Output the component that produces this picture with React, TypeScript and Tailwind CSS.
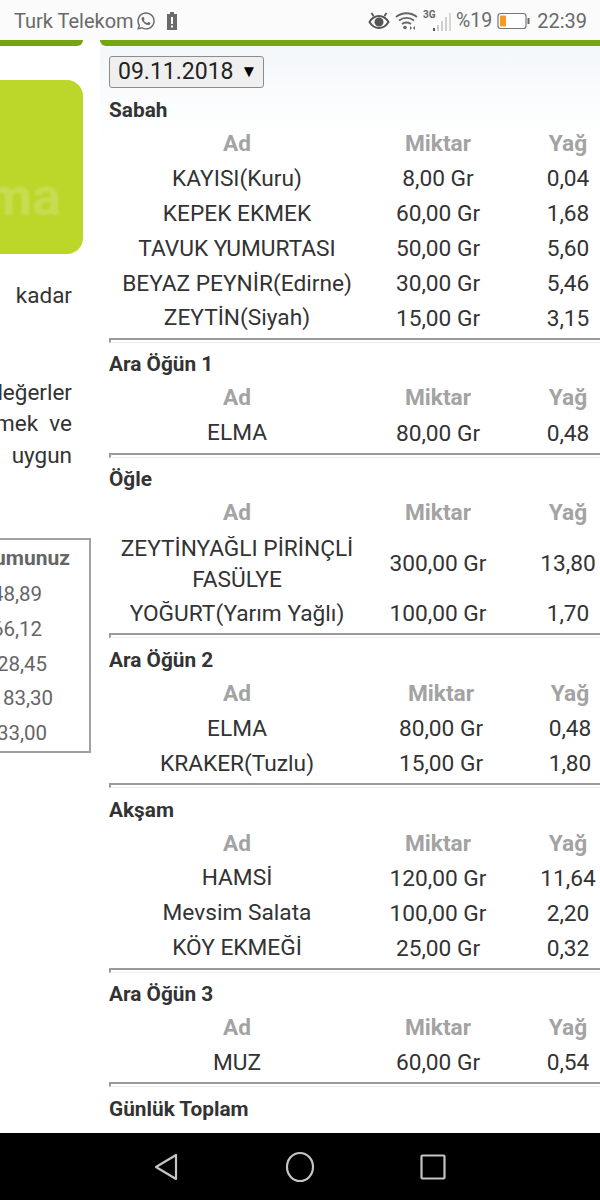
import { FaWhatsapp } from 'react-icons/fa';

type Row = { name: string[]; amount: string; fat: string };

type Meal = { title: string; cols: string; rows: Row[] };

const meals: Meal[] = [
  {
    title: 'Sabah',
    cols: 'grid-cols-[256px_146px_114px]',
    rows: [
      { name: ['KAYISI(Kuru)'], amount: '8,00 Gr', fat: '0,04' },
      { name: ['KEPEK EKMEK'], amount: '60,00 Gr', fat: '1,68' },
      { name: ['TAVUK YUMURTASI'], amount: '50,00 Gr', fat: '5,60' },
      { name: ['BEYAZ PEYNİR(Edirne)'], amount: '30,00 Gr', fat: '5,46' },
      { name: ['ZEYTİN(Siyah)'], amount: '15,00 Gr', fat: '3,15' },
    ],
  },
  {
    title: 'Ara Öğün 1',
    cols: 'grid-cols-[256px_146px_114px]',
    rows: [{ name: ['ELMA'], amount: '80,00 Gr', fat: '0,48' }],
  },
  {
    title: 'Öğle',
    cols: 'grid-cols-[256px_146px_114px]',
    rows: [
      { name: ['ZEYTİNYAĞLI PİRİNÇLİ', 'FASÜLYE'], amount: '300,00 Gr', fat: '13,80' },
      { name: ['YOĞURT(Yarım Yağlı)'], amount: '100,00 Gr', fat: '1,70' },
    ],
  },
  {
    title: 'Ara Öğün 2',
    cols: 'grid-cols-[256px_152px_106px]',
    rows: [
      { name: ['ELMA'], amount: '80,00 Gr', fat: '0,48' },
      { name: ['KRAKER(Tuzlu)'], amount: '15,00 Gr', fat: '1,80' },
    ],
  },
  {
    title: 'Akşam',
    cols: 'grid-cols-[256px_146px_114px]',
    rows: [
      { name: ['HAMSİ'], amount: '120,00 Gr', fat: '11,64' },
      { name: ['Mevsim Salata'], amount: '100,00 Gr', fat: '2,20' },
      { name: ['KÖY EKMEĞİ'], amount: '25,00 Gr', fat: '0,32' },
    ],
  },
  {
    title: 'Ara Öğün 3',
    cols: 'grid-cols-[256px_146px_114px]',
    rows: [{ name: ['MUZ'], amount: '60,00 Gr', fat: '0,54' }],
  },
];

// right padding differs per row, the cells were centered in a wider column
const summary = [
  { value: '48,89', pad: 'pr-[47px]' },
  { value: '66,12', pad: 'pr-[47px]' },
  { value: '128,45', pad: 'pr-[42px]' },
  { value: '83,30', pad: 'pr-[36px]' },
  { value: '133,00', pad: 'pr-[42px]' },
];

function MealTable({ meal }: { meal: Meal }) {
  return (
    <section>
      <h2 className="h-6 pl-[9px] text-[20.800px] leading-6 font-bold text-[#333]">{meal.title}</h2>
      <div className={`mt-[5px] ml-[9px] grid w-[516px] ${meal.cols} text-center text-[22.700px] text-[#333]`}>
        <div className="h-[34.900px] leading-[34.900px] font-bold text-[#a3a3a3]">Ad</div>
        <div className="h-[34.900px] leading-[34.900px] font-bold text-[#a3a3a3]">Miktar</div>
        <div className="h-[34.900px] leading-[34.900px] font-bold text-[#a3a3a3]">Yağ</div>
        {meal.rows.map((row) => (
          <div key={row.name[0]} className="contents">
            <div className={row.name.length > 1 ? 'py-0.5 leading-[31px]' : 'h-[34.900px] leading-[34.900px]'}>
              {row.name.map((line) => (
                <div key={line}>{line}</div>
              ))}
            </div>
            <div className="flex items-center justify-center">{row.amount}</div>
            <div className="flex items-center justify-center">{row.fat}</div>
          </div>
        ))}
      </div>
      <div className="mt-[1.500px] mb-[9.500px] ml-[9px] h-[5px] border-t-2 border-b border-l-2 border-t-[#9a9a9a] border-b-[#eeeeee] border-l-[#9a9a9a]" />
    </section>
  );
}

function StatusBar() {
  return (
    <div className="flex h-10 items-center bg-[#fbfbfb] pt-[2px] pr-[13px] pl-[14px] text-[20px] text-[#6a6a6a]">
      <span>Turk Telekom</span>
      <FaWhatsapp className="ml-[2px] h-5 w-5" />
      {/* battery warning */}
      <svg className="ml-[10px] h-5 w-3" viewBox="0 0 12 20">
        <path d="M4 1h4v2h3v16H1V3h3z" fill="#6a6a6a" />
        <rect x="5" y="6" width="2" height="7" fill="#fff" />
        <rect x="5" y="14.500" width="2" height="2" fill="#fff" />
      </svg>
      <div className="flex-1" />
      {/* eye comfort */}
      <svg className="h-[20px] w-[22px]" viewBox="0 0 21 20" fill="none" stroke="#555" strokeWidth="2">
        <path d="M1 11c3-5 6-6 9.500-6s6.500 1 9.500 6c-3 5-6 6-9.500 6S4 16 1 11z" />
        <circle cx="10.500" cy="11" r="3.500" fill="#555" />
        <path d="M3 2l2 3M18 2l-2 3" strokeWidth="1.800" />
      </svg>
      {/* wifi */}
      <svg className="ml-[5px] h-[20px] w-[23px]" viewBox="0 0 23 20" fill="none" stroke="#666" strokeWidth="1.800">
        <path d="M1 6c6-5 15-5 21 0M4 9.500c4.500-3.500 10.500-3.500 15 0M7 13c2.500-2 6.500-2 9 0" />
        <circle cx="10" cy="16.500" r="1.800" fill="#666" stroke="none" />
        <path d="M15 15v4l2-2zM20 15v4l-2-2z" fill="#666" stroke="none" />
      </svg>
      {/* signal */}
      <svg className="ml-[4px] h-[22px] w-[29px]" viewBox="0 0 29 22">
        <text x="1" y="8" fontSize="10" fontWeight="700" fontFamily="Roboto, sans-serif" fill="#666">3G</text>
        <rect x="11" y="18" width="2" height="3" fill="#555" />
        <rect x="15" y="15" width="2" height="6" fill="#cfcfcf" />
        <rect x="19" y="11" width="2" height="10" fill="#cfcfcf" />
        <rect x="23" y="7" width="2" height="14" fill="#cfcfcf" />
        <rect x="27" y="3" width="2" height="18" fill="#d8d8d8" />
      </svg>
      <span className="ml-[5px] text-[19.500px]">%19</span>
      {/* battery */}
      <svg className="ml-[5px] h-[20px] w-[33px]" viewBox="0 0 33 20">
        <rect x="1" y="2.500" width="28" height="15" rx="2.500" fill="#fff" stroke="#777" strokeWidth="1.200" />
        <rect x="3" y="4.500" width="6" height="11" rx="1" fill="#f59a23" />
        <rect x="30.500" y="7" width="2" height="6" rx="0.500" fill="#666" />
      </svg>
      <span className="ml-[7px]">22:39</span>
    </div>
  );
}

export default function App() {
  return (
    <div className="flex h-[1200px] w-[600px] flex-col overflow-hidden bg-white font-['Roboto',sans-serif]">
      <StatusBar />
      <main className="flex min-h-0 flex-1">
        <aside className="flex w-[91px] shrink-0 flex-col overflow-hidden bg-white">
          <div className="h-[6px] w-[83px] rounded-br-lg bg-[#77a50e]" />
          <div className="mt-[34px] flex h-[174px] w-[83px] items-end justify-end overflow-hidden rounded-r-2xl bg-[#bcd72a] pr-[22px] pb-[30px]">
            <span className="text-[54px] leading-[54px] font-bold whitespace-nowrap text-[#c7dc50] blur-[1px]">ma</span>
          </div>
          <div className="mt-[26px] flex h-[30px] justify-end pr-[19px] text-[22.500px] leading-[30px] whitespace-nowrap text-[#333]">kadar</div>
          <div className="mt-[67px] flex h-[31px] justify-end pr-[19px] text-[22.500px] leading-[31px] whitespace-nowrap text-[#333]">değerler</div>
          <div className="flex h-[31.500px] justify-end pr-[19px] text-[22.500px] leading-[31.500px] whitespace-pre text-[#333]">etmek  ve</div>
          <div className="flex h-[31px] justify-end pr-[19px] text-[22.500px] leading-[30px] whitespace-nowrap text-[#333]">uygun</div>
          <div className="mt-[67.500px] h-[215px] border-y-2 border-r-2 border-[#a0a0a0]">
            <div className="flex h-[37px] items-center justify-end pr-[19px] text-[21px] font-bold whitespace-nowrap text-[#666]">Durumunuz</div>
            {summary.map((item) => (
              <div key={item.value} className={`flex h-[34.800px] items-center justify-end text-[20.500px] whitespace-nowrap text-[#666] ${item.pad}`}>
                {item.value}
              </div>
            ))}
          </div>
        </aside>
        <div className="ml-[9px] min-w-0 flex-1 overflow-hidden bg-gradient-to-b from-[#f3f7fa] to-white to-[100px]">
          <div className="h-[6px] rounded-bl-lg bg-[#77a50e]" />
          <div className="mt-[10px] mb-[10px] ml-[9px] flex h-8 w-[155px] items-center rounded-[3px] border border-[#8c8c8c] bg-[#efefef] pl-2 text-[23px] text-[#222]">
            09.11.2018
            <span className="ml-[7px] text-[17px] text-black">▼</span>
          </div>
          {meals.map((meal) => (
            <MealTable key={meal.title} meal={meal} />
          ))}
          <h2 className="h-6 pl-[9px] text-[20.800px] leading-6 font-bold text-[#333]">Günlük Toplam</h2>
        </div>
      </main>
      <nav className="flex h-[67px] shrink-0 items-center justify-center gap-[101px] bg-black">
        <svg className="h-8 w-8" viewBox="0 0 32 32" fill="none" stroke="#c4c4c4" strokeWidth="2.200" strokeLinejoin="round">
          <path d="M25 4v24L5 16z" />
        </svg>
        <svg className="h-8 w-8" viewBox="0 0 32 32" fill="none" stroke="#c4c4c4" strokeWidth="2.200">
          <ellipse cx="16" cy="16" rx="13" ry="14" />
        </svg>
        <svg className="h-8 w-8" viewBox="0 0 32 32" fill="none" stroke="#c4c4c4" strokeWidth="2.200" strokeLinejoin="round">
          <rect x="4.500" y="4.500" width="23" height="23" rx="1" />
        </svg>
      </nav>
    </div>
  );
}
